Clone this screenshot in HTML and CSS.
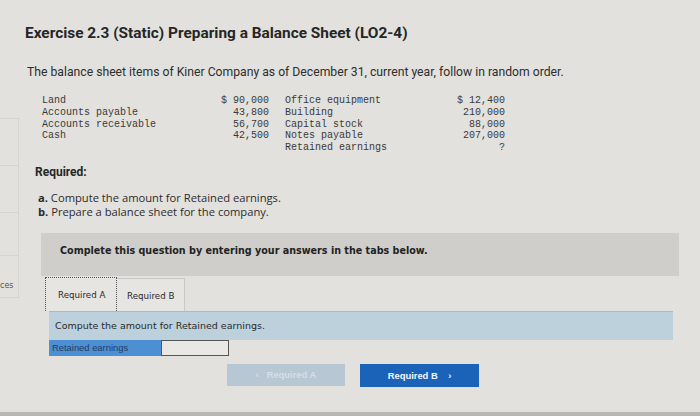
FILE: index.html
```html
<!DOCTYPE html>
<html lang="en">
<head>
<meta charset="utf-8">
<title>Exercise 2.3</title>
<link rel="stylesheet" href="styles.css">
</head>
<body>
<div class="page">
  <aside class="sidebar">
    <div class="side-item"></div>
    <div class="side-item"></div>
    <div class="side-item side-short"></div>
    <div class="side-item side-last"><span class="side-text">ces</span></div>
  </aside>
  <main class="main">
    <h1 class="title">Exercise 2.3 (Static) Preparing a Balance Sheet (LO2-4)</h1>
    <p class="intro">The balance sheet items of Kiner Company as of December 31, current year, follow in random order.</p>
    <div class="items">
      <span class="lbl">Land</span><span class="amt">$ 90,000</span><span class="lbl lbl2">Office equipment</span><span class="amt">$ 12,400</span>
      <span class="lbl">Accounts payable</span><span class="amt">43,800</span><span class="lbl lbl2">Building</span><span class="amt">210,000</span>
      <span class="lbl">Accounts receivable</span><span class="amt">56,700</span><span class="lbl lbl2">Capital stock</span><span class="amt">88,000</span>
      <span class="lbl">Cash</span><span class="amt">42,500</span><span class="lbl lbl2">Notes payable</span><span class="amt">207,000</span>
      <span class="lbl"></span><span class="amt"></span><span class="lbl lbl2">Retained earnings</span><span class="amt">?</span>
    </div>
    <h2 class="required">Required:</h2>
    <ol class="tasks">
      <li><b>a.</b> Compute the amount for Retained earnings.</li>
      <li><b>b.</b> Prepare a balance sheet for the company.</li>
    </ol>
    <div class="instruct">Complete this question by entering your answers in the tabs below.</div>
    <div class="tabs">
      <div class="tab tab-active">Required A</div>
      <div class="tab">Required B</div>
    </div>
    <div class="panel">
      <div class="panel-head">Compute the amount for Retained earnings.</div>
      <div class="answer-row">
        <div class="answer-label">Retained earnings</div>
        <div class="answer-input"></div>
      </div>
      <div class="nav">
        <button class="btn btn-prev">&lsaquo;&nbsp;&nbsp;&nbsp;Required A</button>
        <button class="btn btn-next">Required B&nbsp;&nbsp;&nbsp;&nbsp;&rsaquo;</button>
      </div>
    </div>
  </main>
</div>
<div class="bottom-strip"></div>
</body>
</html>
```

FILE: styles.css
```css
html, body {
  margin: 0;
  padding: 0;
}
body {
  width: 700px;
  height: 416px;
  overflow: hidden;
  background: #e2e1dd;
  color: #2b2b2b;
  font-family: Roboto, "Liberation Sans", sans-serif;
  display: flex;
  flex-direction: column;
}
.page {
  display: flex;
  flex: 1;
}
.sidebar {
  width: 19px;
  flex: none;
  padding-top: 118px;
  display: flex;
  flex-direction: column;
}
.side-item {
  height: 46px;
  border-top: 1px solid #d5d4d0;
  border-right: 1px solid #d5d4d0;
}
.side-short {
  height: 42px;
}
.side-last {
  height: 41px;
  border-bottom: 1px solid #d5d4d0;
  display: flex;
  align-items: flex-end;
}
.side-text {
  font-family: "DejaVu Sans", sans-serif;
  font-size: 8px;
  line-height: 10px;
  color: #555;
  margin-bottom: 6px;
}
.main {
  flex: 1;
  display: flex;
  flex-direction: column;
  align-items: flex-start;
}
.title {
  margin: 24px 0 0 6px;
  font-size: 15.4px;
  line-height: 18px;
  font-weight: 700;
  color: #262626;
}
.intro {
  margin: 23px 0 0 8px;
  font-size: 12.2px;
  line-height: 15px;
  color: #2e2e2e;
}
.items {
  margin: 15px 0 0 23px;
  display: grid;
  grid-template-columns: 179px 48px 188px 48px;
  font-family: "Liberation Mono", monospace;
  font-size: 10px;
  line-height: 11.8px;
  color: #3a3a3a;
}
.items .amt {
  text-align: right;
}
.items .lbl2 {
  padding-left: 16px;
}
.required {
  margin: 11px 0 0 16px;
  font-size: 12px;
  line-height: 15px;
  font-weight: 700;
  color: #262626;
}
.tasks {
  list-style: none;
  margin: 11px 0 0 19px;
  padding: 0;
  font-family: "Open Sans", sans-serif;
  font-size: 11.2px;
  line-height: 14px;
  color: #2c2c2c;
}
.tasks b {
  font-weight: 700;
}
.instruct {
  margin: 14px 0 0 22px;
  width: 638px;
  height: 43px;
  box-sizing: border-box;
  padding: 12px 0 0 19px;
  background: #cfcecb;
  font-family: "DejaVu Sans", sans-serif;
  font-weight: 700;
  font-size: 9.6px;
  line-height: 12px;
  color: #222;
}
.tabs {
  display: flex;
  margin: 1px 0 0 26px;
}
.tab {
  height: 33px;
  box-sizing: border-box;
  padding: 11px 0 0 12px;
  font-family: "DejaVu Sans", sans-serif;
  font-size: 8.7px;
  line-height: 12px;
  color: #2a2a2a;
  background: #e6e5e1;
  border: 1px solid #c9c8c4;
  border-bottom: none;
}
.tab-active {
  width: 72px;
  height: 34px;
  border: 1px dotted #555;
  border-bottom: none;
}
.tab + .tab {
  width: 68px;
  margin-top: 1px;
  padding-left: 10px;
  border-left: none;
}
.panel {
  margin-left: 30px;
  display: flex;
  flex-direction: column;
  align-items: flex-start;
}
.panel-head {
  width: 624px;
  height: 29px;
  box-sizing: border-box;
  padding: 8px 0 0 6px;
  background: #bdd1dd;
  border-top: 1px solid #aab9c2;
  font-family: "DejaVu Sans", sans-serif;
  font-size: 9.5px;
  line-height: 12px;
  color: #2a2a2a;
}
.answer-row {
  display: flex;
  height: 16px;
}
.answer-label {
  width: 112px;
  box-sizing: border-box;
  padding: 2px 0 0 3px;
  background: #4d8fd3;
  font-family: "Liberation Sans", sans-serif;
  font-size: 9.4px;
  line-height: 12px;
  color: #1e3d66;
}
.answer-input {
  width: 68px;
  box-sizing: border-box;
  background: #e9e8e4;
  border: 1px solid #555;
}
.nav {
  display: flex;
  gap: 15px;
  margin: 8px 0 0 178px;
}
.btn {
  height: 22px;
  width: 118px;
  border: none;
  padding: 0;
  font-family: "Liberation Sans", sans-serif;
  font-weight: 700;
  font-size: 9.4px;
  cursor: pointer;
}
.btn-prev {
  background: #b8c7d4;
  color: #d5dee6;
}
.btn-next {
  width: 119px;
  height: 23px;
  background: #1a63b9;
  color: #f2f6fb;
}
.bottom-strip {
  height: 4px;
  background: #b9b8b4;
  flex: none;
}
```
